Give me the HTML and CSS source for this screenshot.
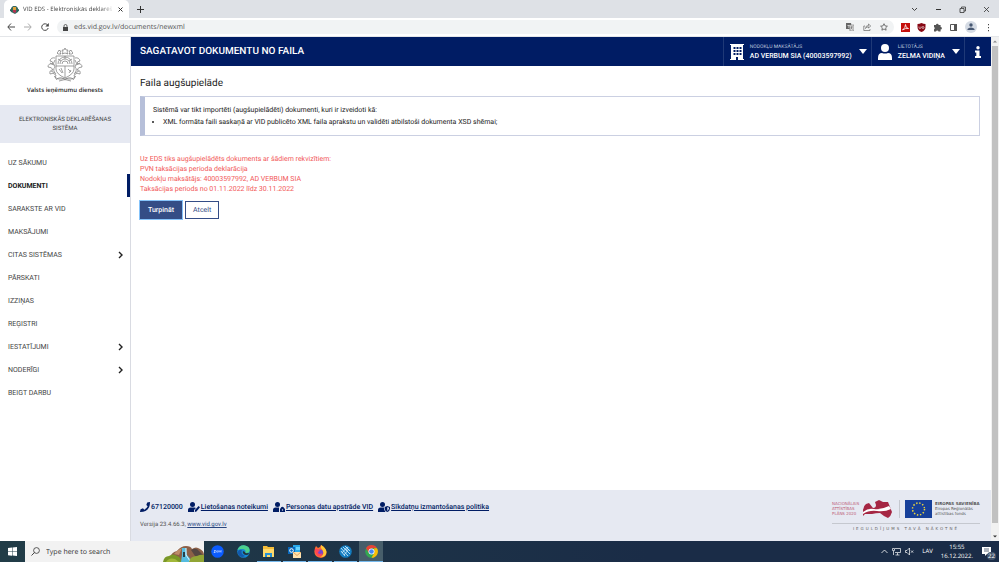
FILE: index.html
```html
<!DOCTYPE html>
<html lang="lv">
<head>
<meta charset="utf-8">
<title>VID EDS - Elektroniskās deklarēšanas sistēma</title>
<link rel="stylesheet" href="styles.css">
</head>
<body>
<svg class="defs" aria-hidden="true">
  <symbol id="crest" viewBox="0 0 36 36">
    <g fill="none" stroke="currentColor" stroke-width=".7">
      <path d="M9 9h18v13q0 5-9 9q-9-4-9-9z"/><path d="M9 19h18M18 19v11M11 17a7 7 0 0 1 14 0M13 17a5 5 0 0 1 10 0M15 17a3 3 0 0 1 6 0M11 12l3 2M25 12l-3 2M18 9v3"/>
      <path d="M12 22l3 4M14 21l2 5M21 22l3 3M22 26l2-3"/>
      <path d="M8 11q-4-1-5 3q3 0 3 3q-5-1-5 3q4 0 5 3q-4 0-3 4q3-2 6 1q-2 3 1 5M8 13q-3 3 0 7q-3 3 1 7M4 24l4 2M3 16l4 2"/>
      <path d="M28 11q4-1 5 3q-3 0-3 3q5-1 5 3q-4 0-5 3q4 0 3 4q-3-2-6 1q2 3-1 5M28 13q3 3 0 7q3 3-1 7M32 24l-4 2M33 16l-4 2"/>
      <path d="M10 32q4-3 8 1q4-4 8-1M7 29q4 5 11 2q7 3 11-2M12 34q6-3 12 0"/>
      <path d="M18 1l1 2h2l-1 2l1 2l-3-1l-3 1l1-2l-1-2h2zM12 3l1 1h1l-1 2l1 1h-3l-1-1l1-1zM24 3l-1 1h-1l1 2l-1 1h3l1-1l-1-1z"/>
    </g>
  </symbol>
  <symbol id="person" viewBox="0 0 14 16"><circle cx="7" cy="4" r="4"/><path d="M0 16v-2q0-5 4-5q3 1 6 0q4 0 4 5v2z"/></symbol>
  <symbol id="chev" viewBox="0 0 6 8"><path d="M1 1l3 3l-3 3" fill="none" stroke="currentColor" stroke-width="1.400"/></symbol>
</svg>

<div class="tabs">
  <div class="tab">
    <svg class="i9" viewBox="0 0 9 9"><path d="M1 3l2-2h3l2 2v4l-3 2l-4-2z" fill="#386b62"/><path d="M3 2h3v3H3z" fill="#e0a43c"/><path d="M3 5h3v2l-1 1l-2-1z" fill="#b63250"/><path d="M0 4l2 1v2l-2-1zM9 4L7 5v2l2-1z" fill="#26635a"/></svg>
    <span class="tab-title">VID EDS - Elektroniskās deklarēš</span>
    <button class="plain" aria-label="Aizvērt cilni"><svg class="i5" viewBox="0 0 5 5"><path d="M.5.5l4 4M4.500.5l-4 4" stroke="#333" /></svg></button>
  </div>
  <button class="plain new-tab" aria-label="Jauna cilne"><svg class="i7" viewBox="0 0 7 7"><path d="M3.500 0v7M0 3.500h7" stroke="#333"/></svg></button>
  <div class="window-buttons">
    <button class="plain" aria-label="Meklēt cilnes"><svg class="i7" viewBox="0 0 7 7"><path d="M1 2l2.500 2.500L6 2" fill="none" stroke="#444"/></svg></button>
    <button class="plain" aria-label="Minimizēt"><svg class="i7" viewBox="0 0 7 7"><path d="M1 3.500h5" stroke="#333"/></svg></button>
    <button class="plain" aria-label="Atjaunot"><svg class="i7" viewBox="0 0 7 7"><path d="M1 2.500h4v4H1zM2.500 2V1h4v4H5" fill="none" stroke="#333" stroke-width=".8"/></svg></button>
    <button class="plain" aria-label="Aizvērt"><svg class="i7" viewBox="0 0 7 7"><path d="M1 1l5 5M6 1L1 6" stroke="#333" stroke-width=".8"/></svg></button>
  </div>
</div>

<div class="toolbar">
  <div class="nav-buttons">
    <button class="plain" aria-label="Atpakaļ"><svg class="i8" viewBox="0 0 8 8"><path d="M8 4H1M4 .5L.8 4L4 7.500" fill="none" stroke="#444"/></svg></button>
    <button class="plain" aria-label="Uz priekšu"><svg class="i8" viewBox="0 0 8 8"><path d="M0 4h7M4 .5L7.200 4L4 7.500" fill="none" stroke="#aaa"/></svg></button>
    <button class="plain" aria-label="Pārlādēt"><svg class="i8" viewBox="0 0 8 8"><path d="M6.800 2.300A3.300 3.300 0 1 0 7.200 5" fill="none" stroke="#444"/><path d="M7.800 0v3.500H4.300z" fill="#444"/></svg></button>
  </div>
  <div class="address">
    <svg class="i7" viewBox="0 0 7 7"><path d="M1 3h5v4H1z" fill="#444"/><path d="M2 3V2a1.500 1.500 0 0 1 3 0v1" fill="none" stroke="#444" stroke-width=".8"/></svg>
    <input class="url" aria-label="Adrese" value="eds.vid.gov.lv/documents/newxml">
    <div class="address-icons">
      <svg class="i8" viewBox="0 0 8 8"><path d="M0 0h5l1 6H0z" fill="#666"/><path d="M3 2h5v6H4z" fill="#ddd" stroke="#777" stroke-width=".6"/><path d="M1.500 2.500h2M2 4h1" stroke="#fff" stroke-width=".7"/><path d="M4.500 4h2.500M5.700 3.300q0 2-1 3M5 4.500l1.500 2" stroke="#555" stroke-width=".5" fill="none"/></svg>
      <svg class="i8" viewBox="0 0 8 8"><path d="M2 3H.8v4.500H7V6M2.500 5.500q0-3 3-3V1L7.700 3L5.500 5V3.800q-2 0-3 1.700z" fill="none" stroke="#666" stroke-width=".7"/></svg>
      <svg class="i8" viewBox="0 0 8 8"><path d="M4 .7l1 2.200l2.400.3l-1.700 1.600l.4 2.400L4 6L1.900 7.200l.4-2.400L.6 3.200L3 2.900z" fill="none" stroke="#444" stroke-width=".7"/></svg>
    </div>
  </div>
  <div class="extensions">
    <svg class="i9" viewBox="0 0 9 9"><path d="M0 0h9v9H0z" fill="#c5100c"/><path d="M1.500 7q3-2 3-5.500q0 3.500 3 4q-3-.6-6 1.500" fill="none" stroke="#fff" stroke-width=".8"/></svg>
    <svg class="i9" viewBox="0 0 9 9"><path d="M4.500 0q2 1 4 1v3q0 3.500-4 5q-4-1.500-4-5V1q2 0 4-1z" fill="#880914"/><path d="M2 3.500v1q0 1 1 1t1-1v-1" fill="none" stroke="#fff" stroke-width=".6"/><circle cx="6" cy="4.500" r="1" fill="none" stroke="#fff" stroke-width=".6"/></svg>
    <svg class="i9" viewBox="0 0 9 9"><path d="M1 2h2a1.300 1.300 0 0 1 2.600 0h2v2a1.300 1.300 0 0 1 0 2.600v1.900H5.500a1.300 1.300 0 0 0-2.500 0H1V6.300a1.300 1.300 0 0 0 0-2.300z" fill="#555"/></svg>
    <svg class="i9" viewBox="0 0 9 9"><path d="M1.500 1.500h6v6h-6z" fill="none" stroke="#555"/><path d="M5 1h3v7H5z" fill="#555"/></svg>
    <svg class="i12" viewBox="0 0 12 12"><circle cx="6" cy="6" r="6" fill="#d5dbe4"/><circle cx="6" cy="4" r="1.700" fill="#485872"/><path d="M2.500 9V8q1-1.500 3.500-1.500T9.500 8v1z" fill="#485872"/></svg>
    <svg class="i9" viewBox="0 0 9 9"><path d="M4 1h1v1.300H4zM4 4h1v1.300H4zM4 7h1v1.300H4z" fill="#444"/></svg>
  </div>
</div>

<div class="page">
  <aside class="sidebar">
    <div class="brand"><svg class="crest"><use href="#crest"/></svg><span>Valsts ieņēmumu dienests</span></div>
    <div class="system">ELEKTRONISKĀS DEKLARĒŠANAS SISTĒMA</div>
    <nav class="menu">
      <a href="#">UZ SĀKUMU</a>
      <a href="#" class="active">DOKUMENTI</a>
      <a href="#">SARAKSTE AR VID</a>
      <a href="#">MAKSĀJUMI</a>
      <a href="#">CITAS SISTĒMAS<svg class="chev"><use href="#chev"/></svg></a>
      <a href="#">PĀRSKATI</a>
      <a href="#">IZZIŅAS</a>
      <a href="#">REĢISTRI</a>
      <a href="#">IESTATĪJUMI<svg class="chev"><use href="#chev"/></svg></a>
      <a href="#">NODERĪGI<svg class="chev"><use href="#chev"/></svg></a>
      <a href="#">BEIGT DARBU</a>
    </nav>
  </aside>
  <div class="content">
    <header class="header">
      <h1>SAGATAVOT DOKUMENTU NO FAILA</h1>
      <button class="picker">
        <svg class="building" viewBox="0 0 14 16"><path d="M0 15h1V1H0V0h14v1h-1v14h1v1H8v-3H6v3H0z" fill="#fff"/><path d="M3.500 3h2v2h-2zM6.500 3h2v2h-2zM9.500 3h2v2h-2zM3.500 6h2v2h-2zM6.500 6h2v2h-2zM9.500 6h2v2h-2zM3.500 9h2v2h-2zM6.500 9h2v2h-2zM9.500 9h2v2h-2z" fill="#001c64"/></svg>
        <span class="picker-text"><small>NODOKĻU MAKSĀTĀJS</small><b>AD VERBUM SIA (40003597992)</b></span>
        <svg class="caret" viewBox="0 0 8 5"><path d="M0 0h8L4 5z" fill="#fff"/></svg>
      </button>
      <button class="picker">
        <svg class="building"><use href="#person"/></svg>
        <span class="picker-text"><small>LIETOTĀJS</small><b>ZELMA VIDIŅA</b></span>
        <svg class="caret" viewBox="0 0 8 5"><path d="M0 0h8L4 5z" fill="#fff"/></svg>
      </button>
      <button class="picker info" aria-label="Informācija"><svg viewBox="0 0 6 12"><circle cx="3" cy="1.700" r="1.700" fill="#fff"/><path d="M0 4.500h4.500V10H6v2H0v-2h1.300V6.500H0z" fill="#fff"/></svg></button>
    </header>
    <main class="main">
      <h2>Faila augšupielāde</h2>
      <section class="notice">
        <p>Sistēmā var tikt importēti (augšupielādēti) dokumenti, kuri ir izveidoti kā:</p>
        <ul><li>XML formāta faili saskaņā ar VID publicēto XML faila aprakstu un validēti atbilstoši dokumenta XSD shēmai;</li></ul>
      </section>
      <p class="details">Uz EDS tiks augšupielādēts dokuments ar šādiem rekvizītiem:<br>PVN taksācijas perioda deklarācija<br>Nodokļu maksātājs: 40003597992, AD VERBUM SIA<br>Taksācijas periods no 01.11.2022 līdz 30.11.2022</p>
      <div class="actions"><button class="primary">Turpināt</button><button class="secondary">Atcelt</button></div>
    </main>
    <footer class="footer">
      <div>
        <div class="links">
          <span class="link"><svg class="phone" viewBox="0 0 10 10"><path d="M9.700 0L7.200.6L6.300 3l1.400 1.200Q6.600 6.600 4.200 7.700L3 6.300L.6 7.200L0 9.700Q0 10 .3 10Q10 9.700 10 .3Q10 0 9.700 0z" fill="#001c64"/></svg><b>67120000</b></span>
          <span class="link"><svg class="user" viewBox="0 0 12 10"><circle cx="4.500" cy="2.500" r="2.500"/><path d="M0 10V8q0-2.500 2.500-2.500h4L8 6L6 8v2zM7 8l3.500-4L12 5.300L8.500 9.500L6.800 10z"/></svg><a href="#">Lietošanas noteikumi</a></span>
          <span class="link"><svg class="user" viewBox="0 0 12 10"><circle cx="4.500" cy="2.500" r="2.500"/><path d="M0 10V8q0-2.500 2.500-2.500H6V10zM7 6.500h.7q0-1.800 1.700-1.800t1.700 1.800h.9V10H7z"/><circle cx="9.500" cy="8" r=".7" fill="#e6e9f2"/></svg><a href="#">Personas datu apstrāde VID</a></span>
          <span class="link"><svg class="user" viewBox="0 0 12 10"><circle cx="4.500" cy="2.500" r="2.500"/><path d="M0 10V8q0-2.500 2.500-2.500H6q0 3 1.500 4.500zM9.300 4L12 5v1.500Q12 9 9.300 10Q6.700 9 6.700 6.500V5z"/><path d="M9.300 5v4q1.700-.8 1.700-3.300z" fill="#e6e9f2"/></svg><a href="#">Sīkdatņu izmantošanas politika</a></span>
        </div>
        <div class="version">Versija 23.4.66.3, <a href="#">www.vid.gov.lv</a></div>
      </div>
      <div class="funding">
        <div class="logos">
          <span class="plan">NACIONĀLAIS<br>ATTĪSTĪBAS<br>PLĀNS 2020</span>
          <svg class="latvia" viewBox="0 0 30 18"><path d="M1 11Q1 6 4 4L7 3L11 8Q14 8 14 5L13 2L17 0L21 2L26 2L28 7L30 12Q29 16 26 18L22 16L18 13Q14 13 10 14L3 14L1 16z" fill="#a52643"/><path d="M1 12Q6 8 12 9Q19 10 27 6L29 9Q23 12 15 11Q7 10 1 14z" fill="#fff"/></svg>
          <svg class="eu" viewBox="0 0 27 18"><path d="M0 0h27v18H0z" fill="#17409a"/><circle cx="13.500" cy="9" r="6" fill="none" stroke="#ecd53b" stroke-width="1.500" stroke-dasharray="1.400 1.742"/></svg>
          <span class="union"><b>EIROPAS SAVIENĪBA</b><br>Eiropas Reģionālās<br>attīstības fonds</span>
        </div>
        <div class="slogan">IEGULDĪJUMS TAVĀ NĀKOTNĒ</div>
      </div>
    </footer>
  </div>
  <div class="scrollbar" aria-hidden="true">
    <svg viewBox="0 0 8 8"><path d="M2 5h4L4 3z" fill="#888"/></svg><div class="thumb"></div><svg viewBox="0 0 8 8"><path d="M2 3h4L4 5z" fill="#333"/></svg>
  </div>
</div>

<div class="taskbar">
  <button class="plain start" aria-label="Sākt"><svg class="i9" viewBox="0 0 9 9"><path d="M0 1l4-.6v3.900H0zM4.500.4L9 0v4.300H4.500zM0 4.800h4v3.900L0 8.200zM4.500 4.800H9V9l-4.500-.4z" fill="#fff"/></svg></button>
  <label class="search">
    <svg class="i9" viewBox="0 0 9 9"><circle cx="5.500" cy="3.500" r="2.900" fill="none" stroke="#333" stroke-width=".8"/><path d="M3.500 5.500L.5 8.500" stroke="#333" stroke-width=".9"/></svg>
    <input aria-label="Meklēt" placeholder="Type here to search">
    <svg class="scene" viewBox="0 0 41 17"><path d="M7 12Q9 7 14 6Q18 1 23 1Q28 1 29 4Q33 1 37 4Q41 6 41 10v7H7z" fill="#8c6047"/><path d="M11 9Q14 5 19 3l-3 7z" fill="#bd8b68"/><path d="M28 5q5-3 8 1l5 5h-9z" fill="#544642"/><path d="M19 3h4l1 7l6 7H18l1-7z" fill="#54bce0"/><path d="M20 7h2v5h-2z" fill="#263f48"/><path d="M23 3v7l4 6" stroke="#e2f6ff" fill="none"/><path d="M0 17Q1 11 6 11Q10 8 14 11Q18 12 18 17z" fill="#7a9827"/><path d="M26 17q1-6 8-6q4-2 7-1v7z" fill="#91a535"/><path d="M3 17q3-5 9-3l4 3z" fill="#a2b83a"/></svg>
  </label>
  <div class="apps">
    <button class="plain" aria-label="Zoom"><svg viewBox="0 0 13 13"><circle cx="6.500" cy="6.500" r="6.300" fill="#0b5cff"/><path d="M3 5.500h1.500L3 7.500h1.500M10 7.500v-2l-1 1l-1-1v2" fill="none" stroke="#fff" stroke-width=".6"/><circle cx="6.200" cy="6.500" r=".8" fill="none" stroke="#fff" stroke-width=".5"/></svg></button>
    <button class="plain" aria-label="Edge"><svg viewBox="0 0 13 13"><circle cx="6.500" cy="6.500" r="6.300" fill="#1687d2"/><path d="M.5 5Q2 0 7 .2q6 .8 5.700 5.500Q12 8.500 8.500 8Q9 4 5.500 4Q3 4 .5 5z" fill="#4bcf8c"/><path d="M5 5Q3 9 8 11q-6 3-7.500-4Q2 4 5 5z" fill="#1359ac"/><path d="M6 6q-1 3 3 4q2 0 3-1q0-1-1-1q-3 1-3-1z" fill="#22333d"/></svg></button>
    <button class="plain open" aria-label="Failu pārlūks"><svg viewBox="0 0 13 13"><path d="M1 1h4l1 1h6v9H1z" fill="#f4bd39"/><path d="M1 4h11v8H1z" fill="#ffd96a"/><path d="M3 8h7v4H8v-2H5v2H3z" fill="#2792d5"/></svg></button>
    <button class="plain open" aria-label="Outlook"><svg viewBox="0 0 13 13"><path d="M5 0h7v8H5z" fill="#28a8ea"/><path d="M8 2h4v3H8z" fill="#67d5ff"/><path d="M0 2h7v7H0z" fill="#0869bd"/><circle cx="3.500" cy="5.500" r="1.800" fill="none" stroke="#fff"/><path d="M5 7h8v6H5z" fill="#ffe1ad"/><path d="M5 7l4 3.500L13 7" fill="none" stroke="#d28b3d" stroke-width=".7"/></svg></button>
    <button class="plain open" aria-label="Firefox"><svg viewBox="0 0 13 13"><path d="M1 3l1-2l2 2q2 0 3-3q4 2 5 5q2 7-5 8Q0 12 .4 6z" fill="#ff6b32"/><path d="M7 0q5 3 5.500 7Q12 12 7 12q5-4 0-9z" fill="#ffca37"/><circle cx="6" cy="7.500" r="3" fill="#7547cf"/><path d="M1 4q3-1 5 2q-2 0-2 2q2 2 4 0q0 4-4 3Q1 9 1 4z" fill="#ff4357"/></svg></button>
    <button class="plain open" aria-label="Tulkošanas rīks"><svg viewBox="0 0 13 13"><circle cx="6.500" cy="6.500" r="6.300" fill="#147dc0"/><path d="M2 3l7 8M4 2l7 7M2 6l4 5M6 1l5 5M3 8l5-6M5 10l5-6M9 2l-2 4" stroke="#d7f0ff" stroke-width=".8"/></svg></button>
    <button class="plain open current" aria-label="Chrome"><svg viewBox="0 0 13 13"><circle cx="6.500" cy="6.500" r="6.300" fill="#33a852"/><path d="M1 3.300a6.300 6.300 0 0 1 11 0H6.500L4 8z" fill="#ea4335"/><path d="M12 3.300a6.300 6.300 0 0 1-5.500 9.500L9.200 8V3.300z" fill="#fbbc05"/><circle cx="6.500" cy="6.500" r="3" fill="#fff"/><circle cx="6.500" cy="6.500" r="2.300" fill="#4285f4"/></svg></button>
  </div>
  <div class="tray">
    <svg class="i7" viewBox="0 0 7 7"><path d="M.5 5l3-3l3 3" fill="none" stroke="#fff" stroke-width=".8"/></svg>
    <svg class="i9" viewBox="0 0 9 9"><path d="M3 1.500h5.500v4H3M5.500 6v2M3.500 8h4M.5 1.500h2v2h-2zM1.500 4v4" fill="none" stroke="#fff" stroke-width=".7"/></svg>
    <svg class="i9" viewBox="0 0 9 9"><path d="M.5 3.500H2L4.500 1v7L2 5.500H.5zM6 3.500l2.200 2.200M8.200 3.500L6 5.700" fill="none" stroke="#fff" stroke-width=".7"/></svg>
    <span class="lang">LAV</span>
    <span class="clock">15:55<br>16.12.2022.</span>
    <span class="notes"><svg viewBox="0 0 10 10"><path d="M0 0h9v7H5L3 9V7H0z" fill="#fff"/><path d="M2 2h5M2 4h5" stroke="#1a2b45" stroke-width=".7"/></svg><span class="count">22</span></span>
  </div>
</div>
</body>
</html>
```
FILE: styles.css
```css
* { box-sizing: border-box; }
body { margin: 0; height: 100vh; display: flex; flex-direction: column; overflow: hidden; background: #fff; color: #222; font: 7px/10px Roboto, sans-serif; text-rendering: geometricPrecision; }
h1, h2, p, ul { margin: 0; }
button, input { font: inherit; color: inherit; text-rendering: inherit; border: 0; padding: 0; margin: 0; background: none; }
input { min-width: 0; outline: 0; }
svg { display: block; flex: none; }
.defs { position: absolute; width: 0; height: 0; }
.plain { display: flex; align-items: center; justify-content: center; }
.i5 { width: 5px; height: 5px; }
.i7 { width: 7px; height: 7px; }
.i8 { width: 8px; height: 8px; }
.i9 { width: 9px; height: 9px; }
.i12 { width: 12px; height: 12px; }

.tabs { flex: none; height: 18px; display: flex; align-items: center; background: #dee1e6; }
.tab { align-self: stretch; width: 125px; margin-left: 4px; padding: 0 6px; display: flex; align-items: center; gap: 4px; background: #fff; border-radius: 5px 5px 0 0; }
.tab-title { flex: 1; white-space: nowrap; color: #444; font: 6px/10px "Open Sans", sans-serif; mask-image: linear-gradient(to right, #000 85%, transparent); }
.new-tab { margin-left: 8px; }
.window-buttons { margin-left: auto; margin-right: 9px; display: flex; gap: 17px; }

.toolbar { flex: none; height: 19px; display: flex; align-items: center; border-bottom: 1px solid #e4e6e9; }
.nav-buttons { display: flex; gap: 9px; padding: 0 8px 0 7px; }
.address { flex: 1; height: 14px; display: flex; align-items: center; gap: 5px; padding: 0 6px 0 5px; background: #f1f3f4; border-radius: 7px; }
.url { flex: 1; height: 14px; padding-top: 1px; color: #555; font: 7px/13px "Open Sans", sans-serif; }
.address-icons { display: flex; gap: 9px; }
.extensions { display: flex; align-items: center; gap: 7px; padding: 0 6px 0 7px; }

.page { flex: 1; min-height: 0; display: flex; }
.sidebar { flex: none; width: 130px; }
.brand { height: 68px; padding-top: 10px; display: flex; flex-direction: column; align-items: center; gap: 2px; font: 600 6px/10px "Open Sans", sans-serif; }
.crest { width: 36px; height: 36px; color: #777; }
.system { height: 38px; padding: 10px 16px 0; background: #e6e9f2; color: #444; text-align: center; font-size: 6px; line-height: 9px; }
.menu { padding-top: 8px; }
.menu a { height: 23px; padding: 0 6px 0 8px; display: flex; align-items: center; justify-content: space-between; color: #444; text-decoration: none; }
.menu .active { font-weight: 700; color: #222; border-right: 3px solid #001c64; }
.chev { width: 6px; height: 8px; color: #222; }

.content { flex: 1; min-width: 0; display: flex; flex-direction: column; border-left: 1px solid #d9dbe2; }
.header { flex: none; height: 29px; display: flex; background: #001c64; color: #fff; }
.header h1 { flex: 1; padding-left: 9px; font: 500 10px/29px Roboto, sans-serif; }
.picker { display: flex; align-items: center; gap: 6px; padding: 0 4px 0 6px; border-left: 1px solid #1f3977; text-align: left; }
.building { width: 14px; height: 16px; fill: #fff; }
.picker-text { display: flex; flex-direction: column; line-height: 9px; }
.picker-text small { font-size: 5px; color: #bcc5dd; }
.picker-text b { font-weight: 500; }
.caret { width: 8px; height: 5px; margin-left: 1px; }
.info { width: 27px; padding: 0; justify-content: center; }
.info svg { width: 6px; height: 12px; }

.main { flex: 1; padding: 10px 11px 0 9px; }
h2 { font: 400 10px/15px Roboto, sans-serif; }
.notice { margin-top: 5px; height: 40px; padding: 8px 8px 0; border: 1px solid #cbd0e2; border-left: 5px solid #b6bfd9; }
.notice p { line-height: 11px; }
.notice ul { padding-left: 10px; line-height: 13px; }
.details { margin-top: 18px; color: #f25858; }
.actions { display: flex; gap: 3px; margin-top: 7px; }
.actions button { height: 18px; padding: 0 7px; border: 1px solid #344d86; color: #344d86; }
.actions .primary { background: #344d86; color: #fff; font-weight: 500; box-shadow: 0 0 0 1px #86c4fb; }

.footer { flex: none; height: 51px; padding: 9px 11px 0 9px; display: flex; justify-content: space-between; background: #e6e9f2; }
.links { display: flex; gap: 5px; }
.link { display: flex; align-items: center; gap: 1px; height: 15px; color: #001c64; font-weight: 500; }
.link b { font-weight: 500; }
.link a { color: inherit; }
.phone { width: 10px; height: 10px; }
.user { width: 12px; height: 10px; fill: #001c64; }
.version { margin-top: 6px; color: #555; font-size: 6px; }
.version a { color: #28457f; }
.logos { display: flex; align-items: center; height: 19px; font: 4px/5px "DejaVu Sans", sans-serif; }
.funding { width: 148px; }
.plan { width: 30px; color: #bd6077; }
.latvia { width: 30px; height: 18px; }
.eu { box-sizing: content-box; width: 27px; height: 18px; margin: 0 3px 0 7px; padding-left: 5px; border-left: 1px solid #c5c8cf; }
.union { color: #555; white-space: nowrap; }
.slogan { margin-top: 5px; padding-top: 2px; border-top: 1px solid #c5c8cf; text-align: center; color: #666; font: 4px/6px "DejaVu Sans", sans-serif; letter-spacing: 2px; }
.scrollbar { width: 8px; display: flex; flex-direction: column; background: #f1f1f1; }
.scrollbar svg { width: 8px; height: 9px; }
.thumb { flex: 0 1 477px; margin: 0 1px; background: #c1c1c1; }
.scrollbar svg:last-child { margin-top: auto; }

.taskbar { flex: none; height: 21px; display: flex; background: linear-gradient(to right, #213c47, #1a2c47 65%); color: #fff; }
.start { width: 25px; }
.search { position: relative; width: 179px; padding-left: 6px; display: flex; align-items: center; gap: 6px; background: #f2f2f2; }
.search input { flex: 1; height: 14px; padding-top: 1px; font: 7px/13px "Open Sans", sans-serif; }
.search input::placeholder { color: #333; opacity: 1; }
.scene { width: 41px; height: 17px; align-self: flex-end; }
.apps { display: grid; grid-template-columns: repeat(7, 1fr); width: 179px; gap: 2px; padding-left: 2px; }
.apps svg { width: 13px; height: 13px; }
.apps .open { border-bottom: 1px solid #76b9ed; padding-top: 1px; }
.apps .current { background: #475e6a; }
.tray { margin-left: auto; display: flex; align-items: center; gap: 4px; font: 6px/9px "Open Sans", sans-serif; }
.lang { margin: 0 4px; }
.clock { text-align: center; }
.notes { position: relative; width: 22px; display: flex; padding-left: 5px; }
.notes svg { width: 10px; height: 10px; }
.count { position: absolute; right: 3px; bottom: -3px; width: 9px; height: 8px; border-radius: 4px; background: #43536a; text-align: center; line-height: 8px; }
```
